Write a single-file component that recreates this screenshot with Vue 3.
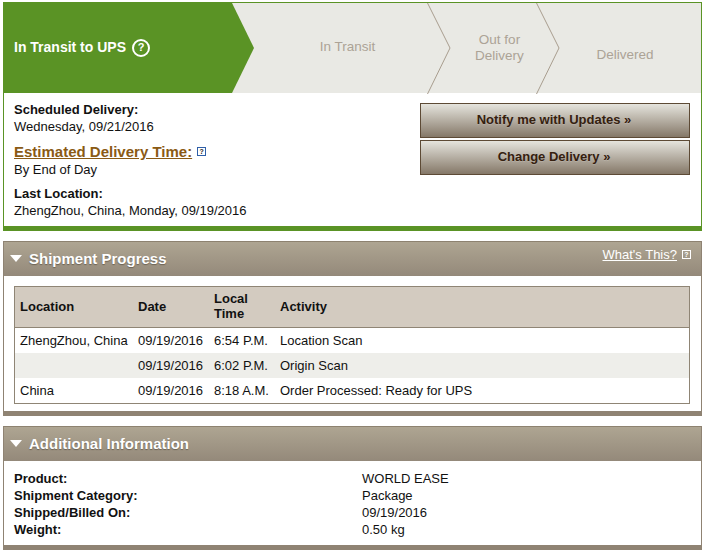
<template>
  <div class="page">
    <!-- status card -->
    <section class="status-card">
      <div class="progress-bar">
        <div class="current-step">
          <span>In Transit to UPS</span>
          <span class="help-circle">?</span>
        </div>
        <div
          v-for="step in steps"
          :key="step.label"
          class="step"
          :class="step.cls"
        >
          <span class="step-label">{{ step.label }}</span>
          <svg v-if="step.chevron" class="chevron" width="24" height="91" viewBox="0 0 24 91">
            <polyline points="0.5,0 23,45 0.5,91" fill="none" stroke="#a89d8e" stroke-width="1" />
          </svg>
        </div>
      </div>
      <div class="status-body">
        <div class="status-info">
          <div class="info-block">
            <div class="strong">Scheduled Delivery:</div>
            <div>Wednesday, 09/21/2016</div>
          </div>
          <div class="info-block">
            <div class="estimate">
              <a class="estimate-link">Estimated Delivery Time:</a>
              <span class="help-box blue">?</span>
            </div>
            <div>By End of Day</div>
          </div>
          <div class="info-block">
            <div class="strong">Last Location:</div>
            <div>ZhengZhou, China, Monday, 09/19/2016</div>
          </div>
        </div>
        <div class="status-actions">
          <button class="action">Notify me with Updates »</button>
          <button class="action">Change Delivery »</button>
        </div>
      </div>
    </section>

    <!-- shipment progress -->
    <section class="panel progress-panel">
      <header class="panel-head">
        <h2><span class="arrow"></span>Shipment Progress</h2>
        <div class="whats-this">
          <a>What's This?</a>
          <span class="help-box white">?</span>
        </div>
      </header>
      <div class="panel-body">
        <table class="activity">
          <thead>
            <tr>
              <th class="c-loc">Location</th>
              <th class="c-date">Date</th>
              <th class="c-time">Local<br />Time</th>
              <th>Activity</th>
            </tr>
          </thead>
          <tbody>
            <tr v-for="(row, i) in rows" :key="i">
              <td>{{ row.location }}</td>
              <td>{{ row.date }}</td>
              <td>{{ row.time }}</td>
              <td>{{ row.activity }}</td>
            </tr>
          </tbody>
        </table>
      </div>
    </section>

    <!-- additional info -->
    <section class="panel info-panel">
      <header class="panel-head">
        <h2><span class="arrow"></span>Additional Information</h2>
      </header>
      <dl class="details">
        <template v-for="item in details" :key="item.label">
          <dt>{{ item.label }}</dt>
          <dd>{{ item.value }}</dd>
        </template>
      </dl>
    </section>
  </div>
</template>

<script setup>
const steps = [
  { label: 'In Transit', cls: 'step-transit', chevron: true },
  { label: 'Out for Delivery', cls: 'step-out', chevron: true },
  { label: 'Delivered', cls: 'step-done', chevron: false }
]

const rows = [
  { location: 'ZhengZhou, China', date: '09/19/2016', time: '6:54 P.M.', activity: 'Location Scan' },
  { location: '', date: '09/19/2016', time: '6:02 P.M.', activity: 'Origin Scan' },
  { location: 'China', date: '09/19/2016', time: '8:18 A.M.', activity: 'Order Processed: Ready for UPS' }
]

const details = [
  { label: 'Product:', value: 'WORLD EASE' },
  { label: 'Shipment Category:', value: 'Package' },
  { label: 'Shipped/Billed On:', value: '09/19/2016' },
  { label: 'Weight:', value: '0.50 kg' }
]
</script>

<style>
html, body {
  margin: 0;
  background: #fff;
}
</style>

<style scoped>
.page {
  width: 704px;
  height: 553px;
  overflow: hidden;
  padding: 2px 2px 0 3px;
  box-sizing: border-box;
  font-family: "Liberation Sans", Arial, sans-serif;
  font-size: 13px;
  line-height: 17px;
  color: #111;
}

.status-card {
  border: 1px solid #5a9325;
  border-bottom: 5px solid #5a9325;
  height: 229px;
  box-sizing: border-box;
}

.progress-bar {
  position: relative;
  display: flex;
  height: 90px;
  padding-left: 241px;
  background: #e9e9e4;
}

.current-step {
  position: absolute;
  left: 0;
  top: 0;
  bottom: 0;
  width: 250px;
  display: flex;
  align-items: center;
  gap: 6px;
  padding: 0 0 1px 10px;
  box-sizing: border-box;
  background: #5a9325;
  clip-path: polygon(0 0, 228px 0, 250px 50%, 228px 100%, 0 100%);
  color: #fff;
  font-weight: bold;
  font-size: 14px;
}

.help-circle {
  width: 14px;
  height: 14px;
  border: 2px solid #fff;
  border-radius: 50%;
  display: flex;
  align-items: center;
  justify-content: center;
  font-size: 11px;
  line-height: 1;
}

.step {
  position: relative;
  display: flex;
  align-items: center;
  justify-content: center;
  text-align: center;
  color: #aca396;
  font-size: 13.5px;
  line-height: 16px;
  box-sizing: border-box;
}

.step-transit { width: 205px; }
.step-out { width: 109px; padding-right: 10px; }
.step-done { width: 142px; padding-right: 10px; padding-top: 13px; }
.step-transit .step-label { margin-top: -2px; }
.step-out .step-label { width: 60px; }

.chevron {
  position: absolute;
  right: -1px;
  top: 0;
}

.status-body {
  display: flex;
  justify-content: space-between;
  padding: 8px 11px 0 10px;
}

.info-block {
  margin-bottom: 7px;
}

.strong {
  font-weight: bold;
}

.estimate {
  display: flex;
  align-items: center;
  gap: 5px;
  line-height: 19px;
}

.estimate-link {
  font-size: 15px;
  font-weight: bold;
  color: #8a5a14;
  text-decoration: underline;
}

.help-box {
  width: 9px;
  height: 9px;
  border: 1px solid;
  box-sizing: border-box;
  font-size: 7px;
  line-height: 7px;
  text-align: center;
  font-weight: bold;
}

.help-box.blue {
  border-color: #2f5fa8;
  color: #222;
}

.help-box.white {
  color: #fff;
}

.status-actions {
  display: flex;
  flex-direction: column;
  gap: 2px;
  width: 270px;
  margin-top: 2px;
}

.action {
  height: 35px;
  padding: 0 2px 2px 0;
  border: 1px solid #5d4a35;
  background: linear-gradient(#e5e4dd, #857868);
  font-family: inherit;
  font-size: 13px;
  font-weight: bold;
  color: #35200f;
  text-shadow: 0 1px 0 rgba(255, 255, 255, 0.15);
}

.panel {
  border-left: 1px solid #8f8373;
  border-right: 1px solid #8f8373;
  box-sizing: border-box;
}

.progress-panel {
  margin-top: 10px;
  height: 175px;
  border-bottom: 5px solid #8f8373;
}

.info-panel {
  margin-top: 10px;
  height: 124px;
  border-bottom: 5px solid #8f8373;
}

.panel-head {
  display: flex;
  justify-content: space-between;
  height: 35px;
  box-sizing: border-box;
  border-top: 1px solid #8d8270;
  background: linear-gradient(#aea592, #94897a);
  color: #fff;
}

.panel-head h2 {
  margin: 0;
  display: flex;
  align-items: center;
  gap: 7px;
  padding: 0 0 2px 6px;
  font-size: 15px;
  font-weight: bold;
  text-shadow: 0 1px 1px rgba(60, 50, 40, 0.5);
}

.arrow {
  width: 0;
  height: 0;
  border-left: 6.5px solid transparent;
  border-right: 6.5px solid transparent;
  border-top: 7px solid #fff;
}

.whats-this {
  display: flex;
  align-items: center;
  gap: 5px;
  padding: 0 10px 10px 0;
  font-size: 13px;
}

.whats-this a {
  text-decoration: underline;
}

.panel-body {
  padding: 10px 10px 0;
}

.activity {
  width: 676px;
  border: 1px solid #8f8575;
  border-collapse: separate;
  border-spacing: 0;
  table-layout: fixed;
}

.activity th {
  height: 41px;
  padding: 0 5px 2px;
  box-sizing: border-box;
  background: #d3cbc0;
  border-bottom: 1px solid #8f8575;
  text-align: left;
  font-weight: bold;
  line-height: 15px;
}

.activity td {
  height: 25px;
  padding: 0 5px;
  box-sizing: border-box;
  white-space: nowrap;
}

.activity tbody tr:nth-child(2) td {
  background: #eeeeea;
}

.c-loc { width: 118px; }
.c-date { width: 76px; }
.c-time { width: 66px; }

.details {
  margin: 0;
  padding: 9px 10px 0;
  display: grid;
  grid-template-columns: 348px 1fr;
}

.details dt {
  font-weight: bold;
}

.details dd {
  margin: 0;
}
</style>
